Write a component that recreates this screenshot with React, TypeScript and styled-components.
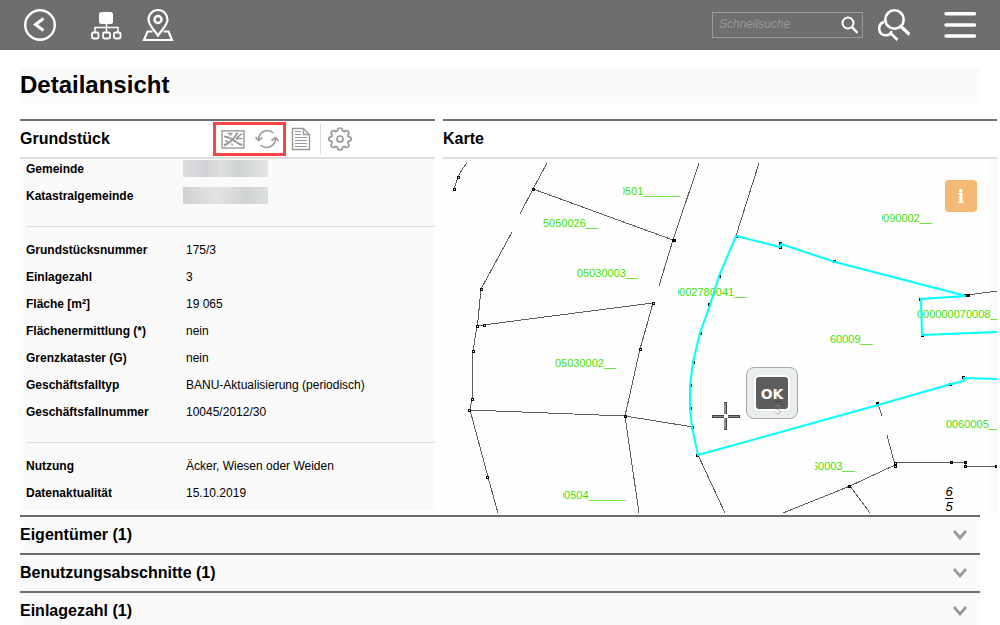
import React from "react";
import styled, { createGlobalStyle } from "styled-components";

const GlobalStyle = createGlobalStyle`
  * { box-sizing: border-box; }
  body {
    margin: 0;
    background: #fff;
    color: #000;
    font-family: "Liberation Sans", Arial, sans-serif;
    font-size: 12px;
  }
  button { padding: 0; border: 0; background: none; font: inherit; color: inherit; cursor: pointer; }
  svg { display: block; }
`;

const TopBar = styled.header`
  display: flex;
  align-items: center;
  justify-content: space-between;
  height: 50px;
  padding: 0 24px;
  background: #6e6e6e;
  color: #fff;
`;

const BarGroup = styled.div<{ $gap: number }>`
  display: flex;
  align-items: center;
  gap: ${(p) => p.$gap}px;
`;

const IconButton = styled.button`
  display: flex;
  align-items: center;
  justify-content: center;
`;

const SearchForm = styled.form`
  display: flex;
  align-items: center;
  width: 151px;
  height: 26px;
  padding: 0 4px 0 6px;
  border: 1px solid #999;
`;

const SearchInput = styled.input`
  flex: 1;
  min-width: 0;
  padding: 0 0 2px;
  border: 0;
  outline: 0;
  background: transparent;
  color: #fff;
  font: italic 12px "Liberation Sans", Arial, sans-serif;
  &::placeholder { color: #999; opacity: 1; }
`;

const PageTitle = styled.h1`
  margin: 17px 20px;
  background: #fafafa;
  font-size: 24px;
  line-height: 36px;
`;

const Columns = styled.main`
  display: grid;
  grid-template-columns: 415px minmax(0, 1fr);
  gap: 8px;
  margin: -1px 3px 0 20px;
`;

const Panel = styled.section`
  border-top: 2px solid #6e6e6e;
`;

const PanelHead = styled.div`
  display: flex;
  align-items: center;
  height: 38px;
  border-bottom: 2px solid #ddd;
`;

const PanelTitle = styled.h2`
  width: 193px;
  margin: 0;
  font-size: 16px;
  line-height: 20px;
`;

const Highlight = styled.div`
  display: flex;
  align-items: center;
  gap: 10px;
  height: 34px;
  padding: 0 4px 0 5px;
  border: 3px solid #fb4343;
`;

const ToolButton = styled(IconButton)<{ $divided?: boolean }>`
  height: 31px;
  color: #999;
  padding: 0 9px 0 5px;
  ${(p) => p.$divided && "border-left: 1px solid #ddd; padding: 0 7px;"}
`;

const MarkedButton = styled(IconButton)`
  color: #999;
`;

const Facts = styled.div`
  padding: 3px 0 9px 6px;
  background: #fafafa;
`;

const FactList = styled.dl`
  display: grid;
  gap: 12px;
  margin: 0;
  & + & {
    margin-top: 22px;
    padding-top: 16px;
    border-top: 1px solid #ddd;
  }
`;

const Fact = styled.div`
  display: grid;
  grid-template-columns: 160px 1fr;
  height: 15px;
  line-height: 15px;
`;

const FactLabel = styled.dt`
  font-weight: bold;
`;

const FactValue = styled.dd`
  margin: 0;
`;

const Redacted = styled.span<{ $tone: string }>`
  display: block;
  width: 85px;
  height: 17px;
  margin: -2px 0 0 -3px;
  background: ${(p) => p.$tone};
`;

const MapArea = styled.div`
  position: relative;
  height: 356px;
  overflow: hidden;
  background: #fefefe;
`;

const MapDrawing = styled.svg`
  width: 100%;
  height: 354px;
`;

const InfoButton = styled.button`
  position: absolute;
  top: 21px;
  right: 20px;
  width: 32px;
  height: 32px;
  border-radius: 4px;
  background: #f3b975;
  color: #fff;
  font: bold 18px "DejaVu Serif", serif;
`;

const OkButton = styled.button`
  position: absolute;
  top: 208px;
  left: 303px;
  display: flex;
  align-items: center;
  justify-content: center;
  width: 52px;
  height: 52px;
  border: 1px solid #a5a8a9;
  border-radius: 8px;
  background: #e9edee;
`;

const OkFace = styled.span`
  width: 36px;
  height: 36px;
  border: 2px solid #fff;
  border-radius: 5px;
  background: #5d5d5d;
  color: #fff;
  font: bold 14px/34px "DejaVu Sans", sans-serif;
`;

const OkGhost = styled.svg`
  position: absolute;
  right: 14px;
  bottom: 1px;
`;

const Accordion = styled.div`
  margin: 0 20px;
`;

const AccordionRow = styled.button`
  display: flex;
  align-items: center;
  justify-content: space-between;
  width: 100%;
  height: 38px;
  padding-right: 13px;
  border-top: 2px solid #6e6e6e;
  background: #fafafa;
  font-size: 16px;
  font-weight: bold;
`;

type FactEntry = { label: string; value?: string; tone?: string };

const factGroups: FactEntry[][] = [
  [
    { label: "Gemeinde", tone: "linear-gradient(90deg, #dcdddd, #d2d2d6 28%, #dedfe0 45%, #ced1d1 65%, #d9dbdb 80%, #e3e4e5)" },
    { label: "Katastralgemeinde", tone: "linear-gradient(90deg, #d0d2d2, #dcdddd 25%, #e2e4e2 40%, #d0d3d1 75%, #dadfe0)" },
  ],
  [
    { label: "Grundstücksnummer", value: "175/3" },
    { label: "Einlagezahl", value: "3" },
    { label: "Fläche [m²]", value: "19 065" },
    { label: "Flächenermittlung (*)", value: "nein" },
    { label: "Grenzkataster (G)", value: "nein" },
    { label: "Geschäftsfalltyp", value: "BANU-Aktualisierung (periodisch)" },
    { label: "Geschäftsfallnummer", value: "10045/2012/30" },
  ],
  [
    { label: "Nutzung", value: "Äcker, Wiesen oder Weiden" },
    { label: "Datenaktualität", value: "15.10.2019" },
  ],
];

const sections = ["Eigentümer (1)", "Benutzungsabschnitte (1)", "Einlagezahl (1)"];

const borders = [
  "467,163 463,168 458,177 454,189",
  "547,163 533,189 520,214",
  "512,232 481,289 478,320 477,326 473,351 472,399 470,410 488,477 498,513",
  "533,189 673,240",
  "699,163 673,240 659,286",
  "477,326 484,325 529,319 653,303 648,321 640,349 625,416 639,513",
  "470,410 625,416 693,427",
  "698,455 725,513",
  "759,163 736,236",
  "968,295 997,291",
  "878,404 882,416",
  "887,435 895,465 850,486 783,513",
  "850,486 870,513",
  "895,463 951,462.500",
  "951,462.500 965.500,462.500 965.500,466.500 997,466.500",
];

const parcel = [
  "966,296 835,262 781,244 780,247 736,236 719,276 710,305 700,333 693,362 690,385 690,408 692,427 698,455 878,405 951,384 964,381 964,378 997,379",
  "966,296 921,299 922,335 997,332",
];

const nodes = [
  [458, 177], [454, 189], [533, 189], [673, 240], [481, 289], [653, 303], [477, 326], [484, 325],
  [473, 351], [472, 399], [469, 410], [487, 477], [640, 349], [625, 416], [895, 463], [895, 466],
  [951, 462], [965, 462], [965, 466], [996, 466], [849, 486], [968, 295],
];

const parcelNodes = [
  [736, 236], [780, 247], [780, 243], [834, 261], [719, 276], [709, 304], [700, 333], [693, 362],
  [690, 385], [690, 408], [692, 427], [697, 455], [877, 403], [950, 384], [963, 377], [965, 295],
  [920, 299], [922, 335],
];

/* text, x, baseline, and the left edge at which the label is cut off */
const mapLabels: [string, number, number, number][] = [
  ["0501______", 619, 195, 623],
  ["5050026__", 543, 227, 540],
  ["05030003__", 577, 277, 570],
  ["0002780041__", 673, 296, 678],
  ["0090002__", 877, 222, 882],
  ["000000070008__", 917, 318, 910],
  ["05030002__", 555, 367, 550],
  ["00504______", 558, 499, 563],
  ["60009__", 830, 343, 825],
  ["0060005__", 946, 428, 940],
  ["60003__", 812, 470, 815],
];

const CadastralMap = () => (
  <MapDrawing viewBox="443 159 554 354" preserveAspectRatio="xMinYMin slice" role="img" aria-label="Karte">
    <rect x="989" y="159" width="8" height="356" fill="#fafafa" />
    <g fill="#44e000" fontSize="11">
      {mapLabels.map(([text, x, y, cut]) => (
        <g key={text + y}>
          <clipPath id={`cut-${x}-${y}`}>
            <rect x={cut} y={y - 14} width="140" height="20" />
          </clipPath>
          <text x={x} y={y} clipPath={`url(#cut-${x}-${y})`}>{text}</text>
        </g>
      ))}
    </g>
    <g fill="none" stroke="#5e5e5e" shapeRendering="crispEdges">
      {borders.map((points) => <polyline key={points} points={points} />)}
    </g>
    <g fill="#000" shapeRendering="crispEdges">
      {parcelNodes.map(([x, y]) => <rect key={`${x}-${y}`} x={x - 1} y={y - 1} width="3" height="3" />)}
    </g>
    <g fill="none" stroke="#00ffff" strokeWidth="2">
      {parcel.map((points) => <polyline key={points} points={points} />)}
    </g>
    <g fill="#000" shapeRendering="crispEdges">
      {nodes.map(([x, y]) => (
        <path key={`${x}-${y}`} fillRule="evenodd" d={`M${x - 1} ${y - 1}h3v3h-3zM${x} ${y}h1v1h-1z`} />
      ))}
      <path d="M672 239h4v3h-4zM966 294h4v2h-4z" />
    </g>
    <g fontSize="13" fontStyle="italic" textAnchor="middle">
      <text x="949" y="496">6</text>
      <text x="949" y="511">5</text>
      <path d="M945 498.500h8" stroke="#000" />
    </g>
    <g shapeRendering="crispEdges">
      <path d="M712 415h12v3h-12zM728 415h12v3h-12zM724 402h3v12h-3zM724 418h3v12h-3z" fill="#8c8c8c" />
      <path d="M712 415h12v1h-12zM728 415h12v1h-12zM712 417h12v1h-12zM728 417h12v1h-12zM726 402h1v12h-1zM726 418h1v12h-1zM712 415h1v3h-1zM739 415h1v3h-1zM724 402h3v1h-3zM724 429h3v1h-3z" fill="#444" />
    </g>
  </MapDrawing>
);

const BackIcon = () => (
  <svg width="32" height="32" viewBox="0 0 32 32" fill="none" stroke="currentColor">
    <circle cx="16" cy="16" r="14.800" strokeWidth="2.400" />
    <path d="M19.500 9.500L11.500 15.500 19.500 21.500" strokeWidth="3" />
  </svg>
);

const TreeIcon = () => (
  <svg width="32" height="32" viewBox="0 0 32 32" fill="none" stroke="currentColor" strokeWidth="1.500">
    <rect x="9" y="3" width="14" height="12" rx="2.500" fill="currentColor" stroke="none" />
    <path d="M16.500 14v9M5 23v-4.500h23V23" />
    <rect x="2" y="23.500" width="6.500" height="6" rx="1.500" strokeWidth="1.800" />
    <rect x="13" y="23.500" width="7" height="6" rx="1.500" strokeWidth="1.800" />
    <rect x="24" y="23.500" width="6.500" height="6" rx="1.500" strokeWidth="1.800" />
  </svg>
);

const PinIcon = () => (
  <svg width="32" height="34" viewBox="0 0 32 34" fill="none" stroke="currentColor" strokeWidth="2.200">
    <path d="M16 27.500C12.500 22.500 6.500 17 6.500 11.500a9.500 9.500 0 0 1 19 0C25.500 17 19.500 22.500 16 27.500z" />
    <circle cx="16" cy="11.500" r="3.500" strokeWidth="2.500" />
    <path d="M10.500 23.500H5.500L2 32h28L26.500 23.500h-5" />
  </svg>
);

const SearchIcon = () => (
  <svg width="18" height="18" viewBox="0 0 18 18" fill="none" stroke="#fff" strokeWidth="2">
    <circle cx="8" cy="7" r="5.500" />
    <path d="M12 11l5.500 6" strokeWidth="2.500" />
  </svg>
);

const DoubleSearchIcon = () => (
  <svg width="32" height="32" viewBox="0 0 32 32" fill="none" stroke="currentColor" strokeWidth="2.600">
    <circle cx="16.500" cy="10.500" r="9.200" />
    <path d="M23 17.500l8.500 8" strokeWidth="3.200" />
    <path d="M6 12.800C-.8 15.500-.5 26.500 8 26.200c3 0 5-1.500 5.500-4.200M13.500 25l6 6" />
  </svg>
);

const MenuIcon = () => (
  <svg width="32" height="26" viewBox="0 0 32 26" stroke="currentColor" strokeWidth="3.400" strokeLinecap="round">
    <path d="M2 1.800h28.500M2 13h28.500M2 24h28.500" />
  </svg>
);

const MapToolIcon = () => (
  <svg width="24" height="19" viewBox="0 0 24 19" fill="none" stroke="currentColor">
    <rect x="1" y=".8" width="22" height="17.200" strokeWidth="1.400" />
    <path d="M3 6.500c5 .5 9 3 12 5.500 2 1.500 4 2.500 6.500 3M3 15.500c6-2.500 10.500-7 13.500-13" strokeWidth="1.900" />
    <path d="M6.500 3.500h4l-1.500 2M21.500 4c-2.500.5-4.500 2-6.500 5.500M21.500 8.500H16M4 10.500l3 1.500M11.500 15.500l-1-2" strokeWidth="1.500" />
  </svg>
);

const RefreshIcon = () => (
  <svg width="24" height="20" viewBox="0 0 24 20" fill="none" stroke="currentColor" strokeWidth="1.600">
    <path d="M3.500 11C3.500 3 12-1.500 18.500 4M20.500 9c0 8-8.500 12.500-15 7" />
    <path d="M.5 8l3 3.500L7.500 8.500M16.500 11.500l4-3 3 3.500" />
  </svg>
);

const DocumentIcon = () => (
  <svg width="20" height="24" viewBox="0 0 20 24" fill="none" stroke="currentColor">
    <path d="M1.500 1.500h11l6 6v15h-17zM12.500 1.500v6h6" strokeWidth="1.400" />
    <path d="M4 4.500h6M4 7.500h6M4 10.500h12M4 13.500h12M4 16.500h12M4 19.500h12" />
  </svg>
);

const GearIcon = () => (
  <svg width="24" height="24" viewBox="0 0 24 24" fill="none" stroke="currentColor" strokeWidth="1.700" strokeLinejoin="round">
    <circle cx="12" cy="12" r="3" />
    <path d="M9.300 3.900Q9.500 1 12 1t2.700 2.900l1.500.7q2.200-1.900 3.900-.2t-.3 3.900l.6 1.400Q23.200 9.800 23.200 12t-2.800 2.300l-.6 1.400q2 2.200.3 3.900t-3.900-.2l-1.500.7Q14.500 23 12 23t-2.700-2.900l-1.500-.7q-2.200 1.900-3.900.2t.3-3.900l-.6-1.400Q.8 14.200.8 12t2.800-2.300l.6-1.400q-2-2.200-.3-3.900t3.900.2z" />
  </svg>
);

const ChevronIcon = () => (
  <svg width="14" height="10" viewBox="0 0 14 10" fill="none" stroke="#999" strokeWidth="2.800">
    <path d="M1 1l6 7 6-7" />
  </svg>
);

export default function App() {
  return (
    <>
      <GlobalStyle />
      <TopBar>
        <BarGroup $gap={34}>
          <IconButton aria-label="Zurück"><BackIcon /></IconButton>
          <BarGroup $gap={20}>
            <IconButton aria-label="Struktur"><TreeIcon /></IconButton>
            <IconButton aria-label="Karte"><PinIcon /></IconButton>
          </BarGroup>
        </BarGroup>
        <BarGroup $gap={34}>
          <BarGroup $gap={15}>
            <SearchForm onSubmit={(e) => e.preventDefault()}>
              <SearchInput aria-label="Schnellsuche" placeholder="Schnellsuche" />
              <IconButton aria-label="Suchen"><SearchIcon /></IconButton>
            </SearchForm>
            <IconButton aria-label="Erweiterte Suche"><DoubleSearchIcon /></IconButton>
          </BarGroup>
          <IconButton aria-label="Menü"><MenuIcon /></IconButton>
        </BarGroup>
      </TopBar>
      <PageTitle>Detailansicht</PageTitle>
      <Columns>
        <Panel>
          <PanelHead>
            <PanelTitle>Grundstück</PanelTitle>
            <Highlight>
              <MarkedButton aria-label="In Karte anzeigen"><MapToolIcon /></MarkedButton>
              <MarkedButton aria-label="Aktualisieren"><RefreshIcon /></MarkedButton>
            </Highlight>
            <ToolButton aria-label="Bericht"><DocumentIcon /></ToolButton>
            <ToolButton aria-label="Einstellungen" $divided><GearIcon /></ToolButton>
          </PanelHead>
          <Facts>
            {factGroups.map((group) => (
              <FactList key={group[0].label}>
                {group.map(({ label, value, tone }) => (
                  <Fact key={label}>
                    <FactLabel>{label}</FactLabel>
                    <FactValue>{tone ? <Redacted $tone={tone} /> : value}</FactValue>
                  </Fact>
                ))}
              </FactList>
            ))}
          </Facts>
        </Panel>
        <Panel>
          <PanelHead>
            <PanelTitle>Karte</PanelTitle>
          </PanelHead>
          <MapArea>
            <CadastralMap />
            <InfoButton aria-label="Information">i</InfoButton>
            <OkButton aria-label="OK">
              <OkFace>OK</OkFace>
              <OkGhost width="10" height="22" viewBox="0 0 10 22" fill="none" aria-hidden="true">
                <path d="M1 6.500h8" stroke="#444" />
                <path d="M2 11.500q3-2.500 5 0 .5 2.500-3 3 4 .2 3.500 3-2 3-5.500 0" stroke="#999" strokeOpacity=".6" />
              </OkGhost>
            </OkButton>
          </MapArea>
        </Panel>
      </Columns>
      <Accordion>
        {sections.map((title) => (
          <AccordionRow key={title} aria-expanded={false}>
            {title}
            <ChevronIcon />
          </AccordionRow>
        ))}
      </Accordion>
    </>
  );
}
